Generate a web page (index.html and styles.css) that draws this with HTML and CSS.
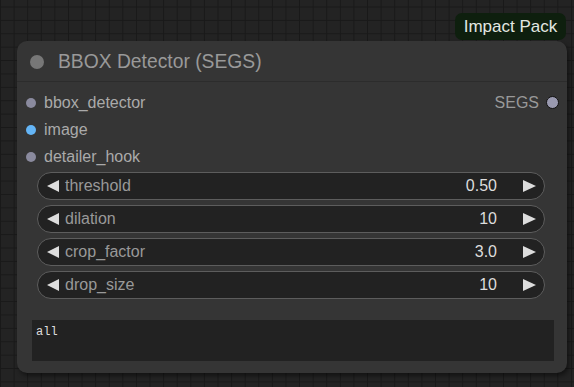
FILE: index.html
```html
<!DOCTYPE html>
<html lang="en">
<head>
	<meta charset="UTF-8">
	<title>BBOX Detector (SEGS)</title>
	<link rel="stylesheet" href="styles.css">
</head>
<body>

<div class="canvas">
	<div class="badge">Impact Pack</div>
	<div class="node">
		<div class="title">
			<span class="title-dot"></span>
			<span class="title-text">BBOX Detector (SEGS)</span>
		</div>
		<div class="slots">
			<div class="slot">
				<span class="dot dot-grey"></span>
				<span class="slot-name">bbox_detector</span>
				<span class="out-name">SEGS</span>
				<span class="dot dot-out"></span>
			</div>
			<div class="slot">
				<span class="dot dot-blue"></span>
				<span class="slot-name">image</span>
			</div>
			<div class="slot">
				<span class="dot dot-grey"></span>
				<span class="slot-name">detailer_hook</span>
			</div>
		</div>
		<div class="widgets">
			<div class="widget">
				<span class="arrow arrow-left"></span>
				<span class="w-label">threshold</span>
				<span class="w-value">0.50</span>
				<span class="arrow arrow-right"></span>
			</div>
			<div class="widget">
				<span class="arrow arrow-left"></span>
				<span class="w-label">dilation</span>
				<span class="w-value">10</span>
				<span class="arrow arrow-right"></span>
			</div>
			<div class="widget">
				<span class="arrow arrow-left"></span>
				<span class="w-label">crop_factor</span>
				<span class="w-value">3.0</span>
				<span class="arrow arrow-right"></span>
			</div>
			<div class="widget">
				<span class="arrow arrow-left"></span>
				<span class="w-label">drop_size</span>
				<span class="w-value">10</span>
				<span class="arrow arrow-right"></span>
			</div>
		</div>
		<div class="textbox">all</div>
	</div>
</div>

</body>
</html>
```

FILE: styles.css
```css
html, body {
	margin: 0;
	padding: 0;
}
body {
	width: 574px;
	height: 387px;
	overflow: hidden;
	font-family: "Liberation Sans", Arial, sans-serif;
}
.canvas {
	position: relative;
	width: 574px;
	height: 387px;
	background-color: #232323;
	background-image:
		linear-gradient(to right, #191919 1px, transparent 1px),
		linear-gradient(to bottom, #191919 1px, transparent 1px);
	background-size: 13.6px 13.4px;
	background-position: 0 6.5px;
}
.badge {
	position: absolute;
	top: 13px;
	left: 455px;
	width: 111px;
	height: 27px;
	box-sizing: border-box;
	background-color: #0e1f0e;
	border-radius: 7px;
	color: #e2e8e2;
	font-size: 17px;
	line-height: 27px;
	text-align: center;
}
.node {
	position: absolute;
	top: 41px;
	left: 17px;
	width: 550px;
	height: 332px;
	box-sizing: border-box;
	background-color: #353535;
	border-radius: 10px;
	box-shadow: 2px 3px 4px rgba(0, 0, 0, 0.45);
	padding-bottom: 12px;
}
.title {
	height: 40px;
	border-bottom: 1px solid #2c2c2c;
	display: flex;
	align-items: center;
	padding-left: 13px;
	gap: 14px;
}
.title-dot {
	width: 14px;
	height: 14px;
	border-radius: 50%;
	background-color: #777;
	margin-top: 2px;
}
.title-text {
	color: #999;
	font-size: 19.3px;
	margin-top: 1px;
}
.slots {
	padding-top: 7px;
}
.slot {
	height: 27px;
	display: flex;
	align-items: center;
	padding: 0 8px 0 9px;
	font-size: 16px;
	color: #aaa;
}
.dot {
	width: 10px;
	height: 10px;
	border-radius: 50%;
	flex: none;
}
.dot-grey {
	background-color: #8a8a9e;
}
.dot-blue {
	background-color: #64b5f6;
}
.dot-out {
	width: 11px;
	height: 11px;
	background-color: #9a9ab0;
	border: 1px solid #111;
}
.slot-name {
	margin-left: 8px;
}
.out-name {
	margin-left: auto;
	margin-right: 7px;
	color: #999;
}
.widgets {
	margin: 2px 22px 0 20px;
	display: flex;
	flex-direction: column;
	gap: 5px;
}
.widget {
	height: 28px;
	box-sizing: border-box;
	border: 1px solid #5d5d5d;
	border-radius: 14px;
	background-color: #222;
	display: flex;
	align-items: center;
	padding: 0 8px 0 9px;
	font-size: 16px;
}
.arrow {
	width: 0;
	height: 0;
	border-top: 6.5px solid transparent;
	border-bottom: 6.5px solid transparent;
	flex: none;
}
.arrow-left {
	border-right: 12px solid #ddd;
}
.arrow-right {
	border-left: 13px solid #ddd;
}
.w-label {
	margin-left: 6px;
	color: #999;
}
.w-value {
	margin-left: auto;
	margin-right: 26px;
	color: #ddd;
}
.textbox {
	margin: 21px 13px 0 15px;
	height: 41px;
	box-sizing: border-box;
	background-color: #222;
	color: #ddd;
	font-family: "Liberation Mono", "Courier New", monospace;
	font-size: 12px;
	padding: 5px 4px;
}
```
